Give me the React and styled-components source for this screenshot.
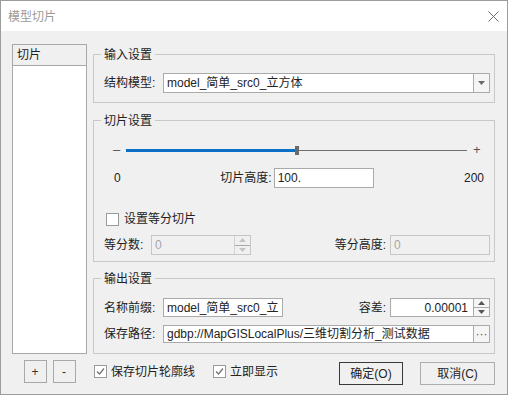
import React from 'react';
import styled, { createGlobalStyle } from 'styled-components';

const GlobalStyle = createGlobalStyle`
  html, body {
    margin: 0;
    padding: 0;
    background: #fff;
  }
  * {
    box-sizing: border-box;
  }
  body {
    font-family: "Liberation Sans", "Noto Sans CJK SC", sans-serif;
    font-size: 12px;
    line-height: 16px;
    color: #222;
  }
`;

const Window = styled.div`
  width: 508px;
  height: 395px;
  border: 1px solid #9c9c9c;
  background: #f0f0f0;
  display: flex;
  flex-direction: column;
`;

const TitleBar = styled.div`
  height: 30px;
  flex-shrink: 0;
  background: #fff;
  display: flex;
  align-items: center;
  justify-content: space-between;
  padding: 0 8px 0 7px;
  color: #9a9a9a;
  font-family: "Noto Sans CJK SC", sans-serif;
`;

const Body = styled.div`
  flex: 1;
  display: grid;
  grid-template-columns: 75px 402px;
  grid-template-rows: 310px auto;
  column-gap: 6px;
  padding: 13px 12px 0 11px;
`;

// 左侧列表
const List = styled.div`
  border: 1px solid #a8a8a8;
  background: #fff;
  display: flex;
  flex-direction: column;
`;

const ListHeader = styled.div`
  height: 21px;
  background: #f0f0f0;
  border-bottom: 1px solid #a8a8a8;
  padding-left: 4px;
  display: flex;
  align-items: center;
`;

const RightColumn = styled.div`
  display: flex;
  flex-direction: column;
  padding-top: 2px;
`;

const Group = styled.fieldset`
  margin: ${(p) => p.$mt || 0}px 0 0 0;
  border: 1px solid #c8c8c8;
  padding: ${(p) => p.$pad};
  min-width: 0;
  display: flex;
  flex-direction: column;
`;

const Legend = styled.legend`
  padding: 0 3px;
  margin-left: -3px;
  line-height: 16px;
  font-family: "Noto Sans CJK SC", sans-serif;
`;

const Row = styled.div`
  display: flex;
  align-items: center;
  height: ${(p) => p.$h || 20}px;
  margin-top: ${(p) => p.$mt || 0}px;
  justify-content: ${(p) => p.$justify || 'flex-start'};
`;

const Label = styled.span`
  width: ${(p) => (p.$w ? `${p.$w}px` : 'auto')};
  margin-right: ${(p) => p.$gap || 0}px;
  white-space: nowrap;
`;

const Field = styled.div`
  display: flex;
  align-items: stretch;
  width: ${(p) => p.$w}px;
  height: ${(p) => p.$h || 20}px;
  border: 1px solid ${(p) => (p.$disabled ? '#c6c6c6' : '#aaaaaa')};
  background: ${(p) => (p.$disabled ? '#f0f0f0' : '#fff')};
  color: ${(p) => (p.$disabled ? '#a6a6a6' : '#222')};
`;

const FieldText = styled.span`
  flex: 1;
  display: flex;
  align-items: center;
  justify-content: ${(p) => (p.$right ? 'flex-end' : 'flex-start')};
  padding: 0 5px 0 3px;
  white-space: nowrap;
  overflow: hidden;
`;

const SideButton = styled.div`
  width: 16px;
  border-left: 1px solid ${(p) => (p.$disabled ? '#d2d2d2' : '#aaaaaa')};
  background: ${(p) => (p.$disabled ? '#f0f0f0' : '#f5f5f5')};
  display: flex;
  align-items: center;
  justify-content: center;
  color: #555;
`;

const SpinColumn = styled.div`
  width: 16px;
  border-left: 1px solid ${(p) => (p.$disabled ? '#d2d2d2' : '#aaaaaa')};
  display: flex;
  flex-direction: column;
`;

const SpinHalf = styled.div`
  flex: 1;
  display: flex;
  align-items: center;
  justify-content: center;
  background: ${(p) => (p.$disabled ? '#f0f0f0' : '#f5f5f5')};
  & + & {
    border-top: 1px solid ${(p) => (p.$disabled ? '#d2d2d2' : '#aaaaaa')};
  }
`;

// 滑块
const SliderRow = styled.div`
  display: flex;
  align-items: center;
  height: 16px;
  padding-left: 9px;
  color: #555;
`;

const SliderMark = styled.span`
  width: ${(p) => p.$w}px;
  text-align: center;
  font-size: 13px;
`;

const Track = styled.div`
  display: flex;
  align-items: center;
  width: 341px;
  height: 9px;
  margin: 0 6px 0 7px;
`;

const TrackFill = styled.div`
  height: 3px;
  background: #0b6fc6;
`;

const Thumb = styled.div`
  width: 4px;
  height: 9px;
  background: #6a6a6a;
  flex-shrink: 0;
`;

const TrackRest = styled.div`
  flex: 1;
  height: 1px;
  background: #707070;
`;

const ValueRow = styled.div`
  display: grid;
  grid-template-columns: 1fr auto 1fr;
  align-items: center;
  height: 20px;
  margin-top: 10px;
`;

const Check = styled.span`
  width: 13px;
  height: 13px;
  border: 1px solid #9a9a9a;
  background: #fff;
  display: inline-flex;
  align-items: center;
  justify-content: center;
  margin-right: ${(p) => p.$gap || 4}px;
  flex-shrink: 0;
`;

const BottomLeft = styled.div`
  display: flex;
  justify-content: center;
  gap: 6px;
  padding-top: 6px;
`;

const SmallButton = styled.div`
  width: 23px;
  height: 23px;
  border: 1px solid #a8a8a8;
  background: #f0f0f0;
  display: flex;
  align-items: center;
  justify-content: center;
  color: #333;
`;

const BottomRight = styled.div`
  display: flex;
  align-items: flex-start;
`;

const CheckItem = styled.div`
  display: flex;
  align-items: center;
  height: 16px;
  margin: 9px ${(p) => p.$mr || 0}px 0 ${(p) => p.$ml || 0}px;
  font-family: "Noto Sans CJK SC", sans-serif;
`;

const Spacer = styled.div`
  flex: 1;
`;

const DialogButton = styled.div`
  width: ${(p) => p.$w}px;
  height: 23px;
  margin: 8px 0 0 ${(p) => p.$ml || 0}px;
  border: 1px solid ${(p) => (p.$primary ? '#3a3a3a' : '#adadad')};
  background: #f0f0f0;
  display: flex;
  align-items: center;
  justify-content: center;
`;

const Arrow = ({ up, color = '#6a6a6a' }) => (
  <svg width="7" height="4" viewBox="0 0 7 4">
    <polygon points={up ? '0,4 7,4 3.5,0' : '0,0 7,0 3.5,4'} fill={color} />
  </svg>
);

const CheckMark = () => (
  <svg width="9" height="9" viewBox="0 0 9 9">
    <polyline points="1,4.5 3.5,7 8,1.5" fill="none" stroke="#707070" strokeWidth="1.2" />
  </svg>
);

const CloseIcon = () => (
  <svg width="11" height="11" viewBox="0 0 11 11">
    <path d="M0.5 0.5 L10.5 10.5 M10.5 0.5 L0.5 10.5" stroke="#6a6a6a" strokeWidth="1" />
  </svg>
);

const Spin = ({ w, h, value, disabled, right }) => (
  <Field $w={w} $h={h} $disabled={disabled}>
    <FieldText $right={right}>{value}</FieldText>
    <SpinColumn $disabled={disabled}>
      <SpinHalf $disabled={disabled}>
        <Arrow up color={disabled ? '#c4c4c4' : '#555'} />
      </SpinHalf>
      <SpinHalf $disabled={disabled}>
        <Arrow color={disabled ? '#c4c4c4' : '#555'} />
      </SpinHalf>
    </SpinColumn>
  </Field>
);

const App = () => {
  const value = 100;
  const max = 200;
  const fill = Math.round((value / max) * 337);

  return (
    <>
      <GlobalStyle />
      <Window>
        <TitleBar>
          <span>模型切片</span>
          <CloseIcon />
        </TitleBar>
        <Body>
          <List>
            <ListHeader>切片</ListHeader>
          </List>

          <RightColumn>
            <Group $pad="11px 4px 9px 10px">
              <Legend>输入设置</Legend>
              <Row>
                <Label $w={59}>结构模型:</Label>
                <Field $w={327}>
                  <FieldText>model_简单_src0_立方体</FieldText>
                  <SideButton>
                    <Arrow />
                  </SideButton>
                </Field>
              </Row>
            </Group>

            <Group $mt={9} $pad="14px 4px 6px 10px">
              <Legend>切片设置</Legend>
              <SliderRow>
                <SliderMark $w={6}>–</SliderMark>
                <Track>
                  <TrackFill style={{ width: fill }} />
                  <Thumb />
                  <TrackRest />
                </Track>
                <SliderMark $w={7}>+</SliderMark>
              </SliderRow>
              <ValueRow>
                <span style={{ paddingLeft: 10 }}>0</span>
                <Row>
                  <Label $gap={2}>切片高度:</Label>
                  <Field $w={100}>
                    <FieldText>100.</FieldText>
                  </Field>
                </Row>
                <span style={{ textAlign: 'right', paddingRight: 6 }}>200</span>
              </ValueRow>
              <Row $h={16} $mt={23} style={{ paddingLeft: 2 }}>
                <Check $gap={5} />
                <span>设置等分切片</span>
              </Row>
              <Row $mt={8} $justify="space-between">
                <Row>
                  <Label $w={47}>等分数:</Label>
                  <Spin w={100} value="0" disabled />
                </Row>
                <Row>
                  <Label $gap={4}>等分高度:</Label>
                  <Field $w={100} $disabled>
                    <FieldText>0</FieldText>
                  </Field>
                </Row>
              </Row>
            </Group>

            <Group $mt={8} $pad="12px 4px 10px 10px">
              <Legend>输出设置</Legend>
              <Row $h={19} $justify="space-between">
                <Row $h={19}>
                  <Label $w={59}>名称前缀:</Label>
                  <Field $w={120} $h={19}>
                    <FieldText>model_简单_src0_立</FieldText>
                  </Field>
                </Row>
                <Row $h={19}>
                  <Label $gap={4}>容差:</Label>
                  <Spin w={100} h={19} value="0.00001" right />
                </Row>
              </Row>
              <Row $h={18} $mt={8}>
                <Label $w={59}>保存路径:</Label>
                <Field $w={327} $h={18}>
                  <FieldText>gdbp://MapGISLocalPlus/三维切割分析_测试数据</FieldText>
                  <SideButton>···</SideButton>
                </Field>
              </Row>
            </Group>
          </RightColumn>

          <BottomLeft>
            <SmallButton>+</SmallButton>
            <SmallButton>-</SmallButton>
          </BottomLeft>

          <BottomRight>
            <CheckItem $ml={1} $mr={18}>
              <Check>
                <CheckMark />
              </Check>
              保存切片轮廓线
            </CheckItem>
            <CheckItem>
              <Check>
                <CheckMark />
              </Check>
              立即显示
            </CheckItem>
            <Spacer />
            <DialogButton $w={64} $primary>
              确定(O)
            </DialogButton>
            <DialogButton $w={75} $ml={17}>
              取消(C)
            </DialogButton>
          </BottomRight>
        </Body>
      </Window>
    </>
  );
};

export default App;
